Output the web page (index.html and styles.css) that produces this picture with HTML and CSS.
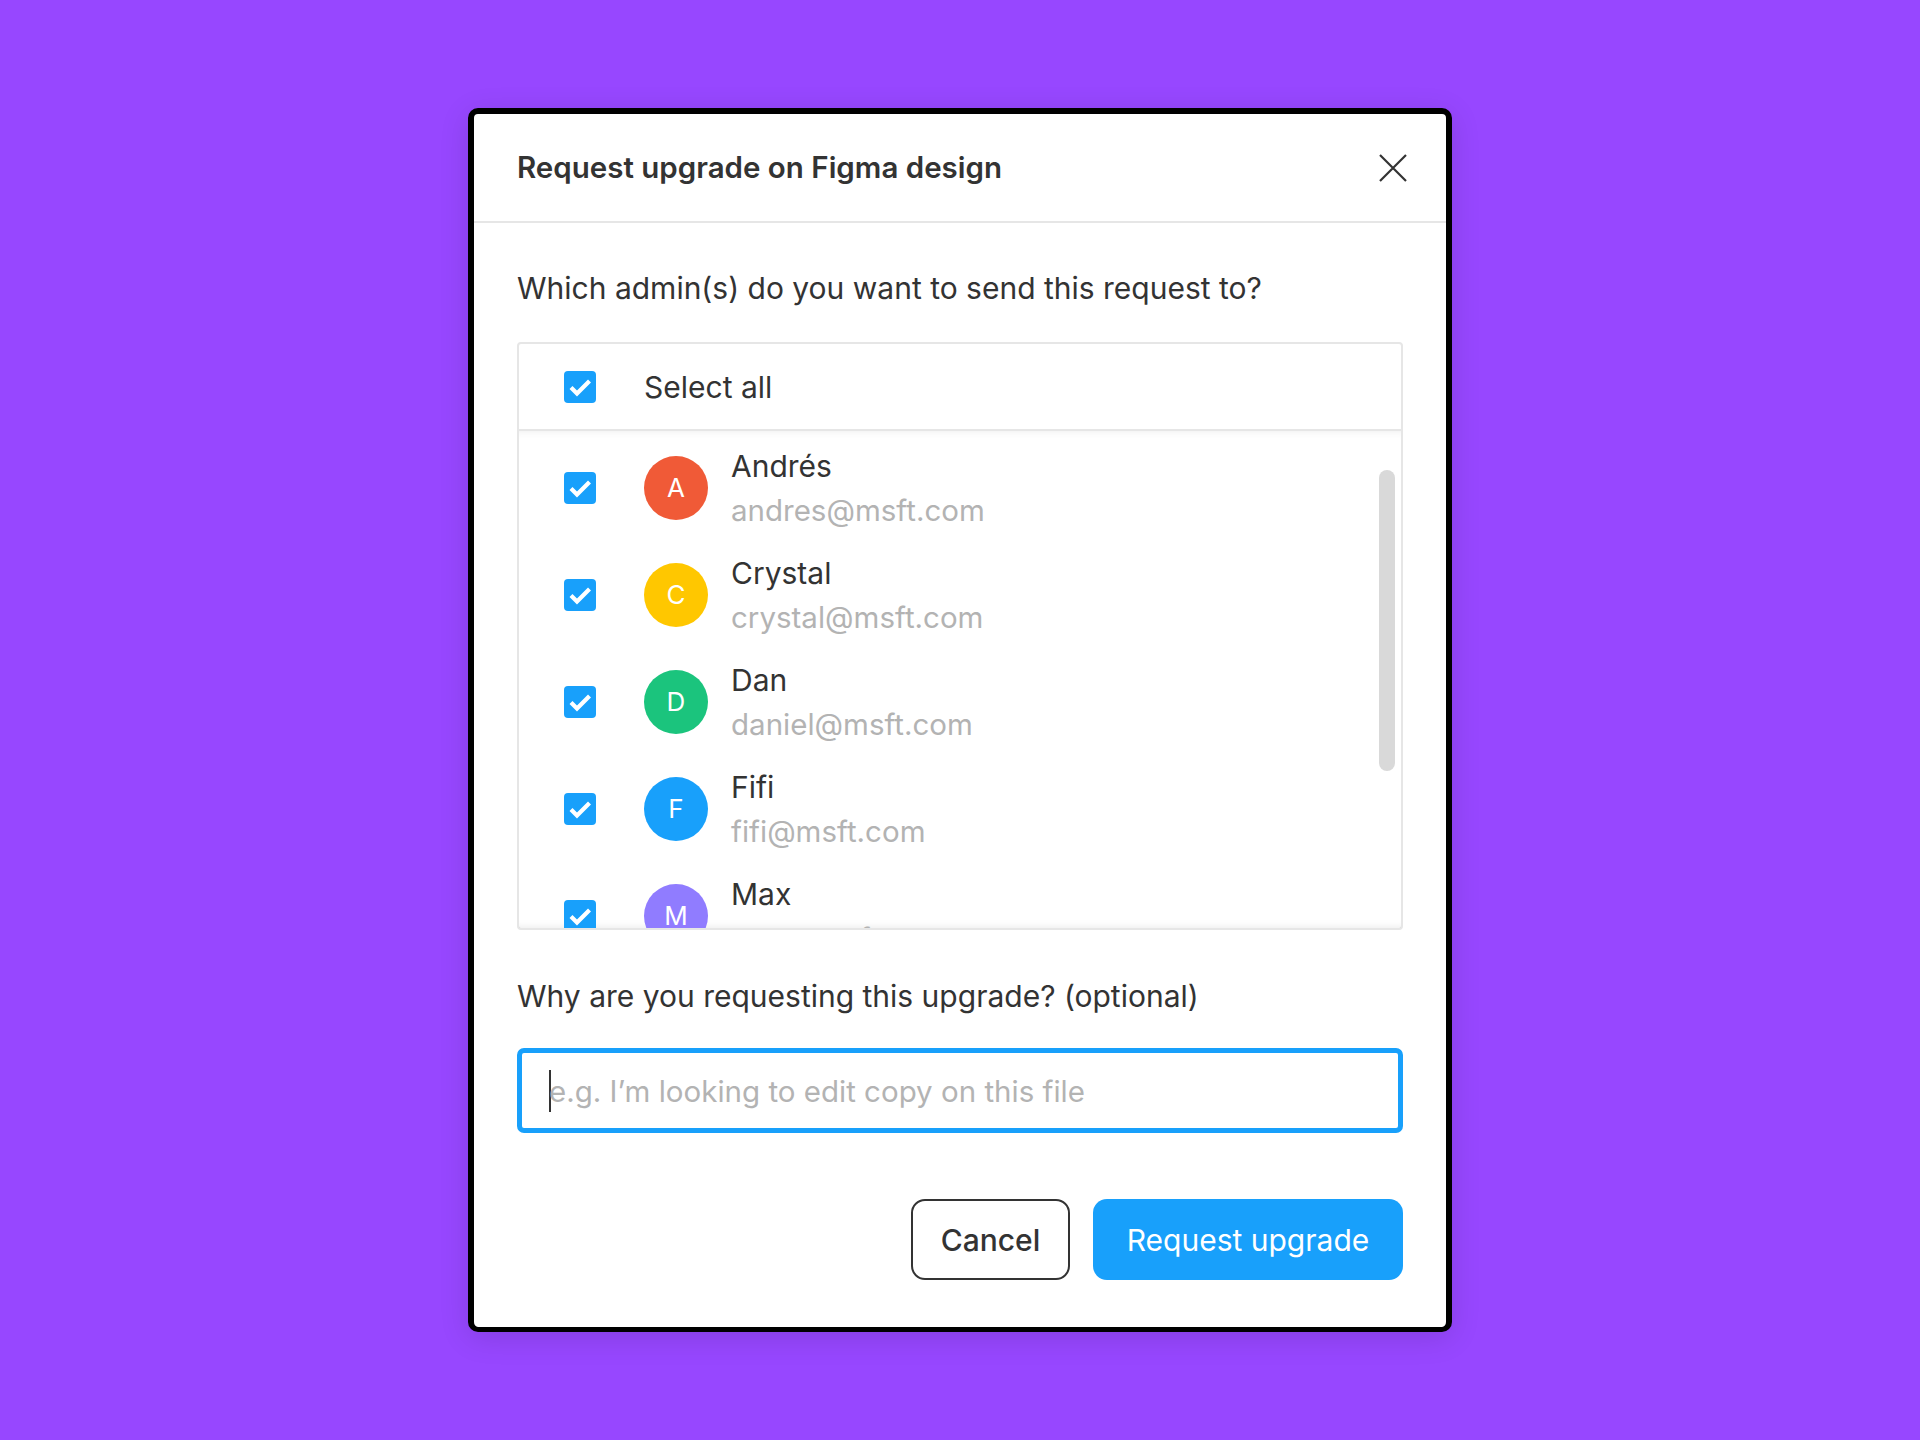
FILE: index.html
```html
<!DOCTYPE html>
<html lang="en">
<head>
	<meta charset="UTF-8">
	<title>Request upgrade</title>
<link rel="stylesheet" href="styles.css">
</head>
<body>
	<div id="modal">
		<div class="header">
			<h1 class="title">Request upgrade on Figma design</h1>
			<a href="javascript:;" class="close">
				<svg width="28" height="28" viewBox="0 0 28 28"><path d="M1 1L27 27M27 1L1 27" stroke="#333" stroke-width="2.2" fill="none"/></svg>
			</a>
		</div>
		<div class="content">
			<p class="label">Which admin(s) do you want to send this request to?</p>
			<div class="list">
				<div class="row all">
					<span class="check"><svg width="32" height="32" viewBox="0 0 32 32"><rect width="32" height="32" rx="4" fill="#18a0fb"/><path d="M7 16.5L13 22.5L25.5 10" stroke="#fff" stroke-width="4.2" fill="none"/></svg></span>
					<span class="name">Select all</span>
				</div>
				<div class="scroll">
					<div class="row">
						<span class="check"><svg width="32" height="32" viewBox="0 0 32 32"><rect width="32" height="32" rx="4" fill="#18a0fb"/><path d="M7 16.5L13 22.5L25.5 10" stroke="#fff" stroke-width="4.2" fill="none"/></svg></span>
						<span class="avatar red">A</span>
						<div class="who"><div class="name">Andrés</div><div class="email">andres@msft.com</div></div>
					</div>
					<div class="row">
						<span class="check"><svg width="32" height="32" viewBox="0 0 32 32"><rect width="32" height="32" rx="4" fill="#18a0fb"/><path d="M7 16.5L13 22.5L25.5 10" stroke="#fff" stroke-width="4.2" fill="none"/></svg></span>
						<span class="avatar yellow">C</span>
						<div class="who"><div class="name">Crystal</div><div class="email">crystal@msft.com</div></div>
					</div>
					<div class="row">
						<span class="check"><svg width="32" height="32" viewBox="0 0 32 32"><rect width="32" height="32" rx="4" fill="#18a0fb"/><path d="M7 16.5L13 22.5L25.5 10" stroke="#fff" stroke-width="4.2" fill="none"/></svg></span>
						<span class="avatar green">D</span>
						<div class="who"><div class="name">Dan</div><div class="email">daniel@msft.com</div></div>
					</div>
					<div class="row">
						<span class="check"><svg width="32" height="32" viewBox="0 0 32 32"><rect width="32" height="32" rx="4" fill="#18a0fb"/><path d="M7 16.5L13 22.5L25.5 10" stroke="#fff" stroke-width="4.2" fill="none"/></svg></span>
						<span class="avatar blue">F</span>
						<div class="who"><div class="name">Fifi</div><div class="email">fifi@msft.com</div></div>
					</div>
					<div class="row">
						<span class="check"><svg width="32" height="32" viewBox="0 0 32 32"><rect width="32" height="32" rx="4" fill="#18a0fb"/><path d="M7 16.5L13 22.5L25.5 10" stroke="#fff" stroke-width="4.2" fill="none"/></svg></span>
						<span class="avatar purple">M</span>
						<div class="who"><div class="name">Max</div><div class="email">max@msft.com</div></div>
					</div>
				</div>
				<div class="thumb"></div>
			</div>
			<p class="label second">Why are you requesting this upgrade? (optional)</p>
			<div class="field">
				<span class="caret"></span><span class="placeholder">e.g. I’m looking to edit copy on this file</span>
			</div>
			<div class="actions">
				<a href="javascript:;" class="btn cancel">Cancel</a>
				<a href="javascript:;" class="btn primary">Request upgrade</a>
			</div>
		</div>
	</div>
</body>
</html>
```

FILE: styles.css
```css
* {
	margin: 0;
	padding: 0;
	box-sizing: border-box;
}
body {
	background: #9747ff;
	font-family: Inter, "Noto Sans", sans-serif;
	color: #333;
	padding-top: 108px;
	height: 1440px;
}
#modal {
	width: 984px;
	height: 1224px;
	margin: 0 auto;
	background: #fff;
	border: 6px solid #000;
	border-bottom-width: 5px;
	border-radius: 10px;
	box-shadow: 0 6px 30px rgba(0,0,0,0.12);
}
.header {
	height: 109px;
	border-bottom: 2px solid #e6e6e6;
	display: flex;
	align-items: center;
	justify-content: space-between;
	padding: 0 39px 0 43px;
}
.title {
	font-size: 29.5px;
	font-weight: 600;
	line-height: 34px;
	color: #333;
	margin-top: -2px;
}
.close {
	display: block;
	width: 28px;
	height: 28px;
	margin-top: 1px;
}
.close svg {
	display: block;
}
.content {
	padding: 48px 43px 0;
}
.label {
	font-size: 30px;
	line-height: 34px;
}
.list {
	position: relative;
	margin-top: 37px;
	height: 588px;
	border: 2px solid #e6e6e6;
	border-radius: 4px;
}
.row {
	display: flex;
	align-items: center;
	height: 107px;
	padding-left: 45px;
}
.row.all {
	height: 87px;
	border-bottom: 2px solid #e6e6e6;
}
.check {
	width: 32px;
	height: 32px;
	margin-right: 48px;
}
.check svg {
	display: block;
}
.name {
	font-size: 30px;
	line-height: 44px;
}
.row.all .name {
	line-height: 34px;
}
.email {
	font-size: 29.5px;
	line-height: 44px;
	color: #b3b3b3;
}
.scroll {
	height: 497px;
	overflow: hidden;
	padding-top: 3px;
	box-shadow: inset 0 8px 8px -8px rgba(0,0,0,0.08), inset 0 -8px 8px -8px rgba(0,0,0,0.1);
}
.avatar {
	width: 64px;
	height: 64px;
	border-radius: 50%;
	color: #fff;
	font-size: 26px;
	display: flex;
	align-items: center;
	justify-content: center;
	margin-right: 23px;
	flex-shrink: 0;
}
.red { background: #f05a37; }
.yellow { background: #ffc700; }
.green { background: #1bc47d; }
.blue { background: #18a0fb; }
.purple { background: #907cff; }
.who {
	padding-top: 1px;
}
.thumb {
	position: absolute;
	right: 6px;
	top: 126px;
	width: 16px;
	height: 301px;
	border-radius: 8px;
	background: #d9d9d9;
}
.label.second {
	margin-top: 49px;
}
.field {
	margin-top: 35px;
	height: 85px;
	border: 5px solid #18a0fb;
	border-radius: 7px;
	padding-left: 27px;
	display: flex;
	align-items: center;
	font-size: 29.5px;
}
.caret {
	width: 2px;
	height: 42px;
	background: #333;
	margin-right: -2px;
}
.placeholder {
	color: #b3b3b3;
}
.actions {
	margin-top: 66px;
	display: flex;
	justify-content: flex-end;
	gap: 23px;
}
.btn {
	height: 81px;
	display: flex;
	align-items: center;
	justify-content: center;
	font-size: 30px;
	text-decoration: none;
	border-radius: 14px;
}
.cancel {
	width: 159px;
	border: 2px solid #333;
	color: #333;
	font-weight: 500;
}
.primary {
	width: 310px;
	background: #18a0fb;
	color: #fff;
}
```
